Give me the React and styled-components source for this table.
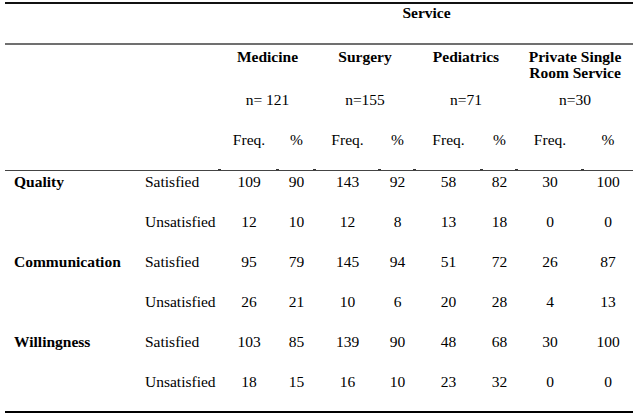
import React from 'react';
import styled, { createGlobalStyle } from 'styled-components';

const GlobalStyle = createGlobalStyle`
    html, body {
        margin: 0;
        padding: 0;
        background: #fff;
    }
    body {
        font-family: "Liberation Serif", "Times New Roman", serif;
        color: #000;
    }
`

const Page = styled.div`
    padding: 2px 0 0 5px;
    width: 642px;
    height: 418px;
    box-sizing: border-box;
`

// tables don't always inherit the font in quirks mode, so set it here
const Table = styled.table`
    width: 628px;
    table-layout: fixed;
    border-collapse: separate;
    border-spacing: 0;
    font-family: "Liberation Serif", "Times New Roman", serif;
    font-size: 15.5px;
    line-height: 18px;
    color: #000;
`

const Row = styled.tr`
    height: ${props => props.h}px;
`

// every cell sits at the top of its row, the row height gives the spacing
const Cell = styled.td`
    vertical-align: top;
    padding: ${props => props.pt || 0}px 0 0 0;
    text-align: center;
    white-space: nowrap;
    position: relative;
    box-sizing: border-box;
    border-top: ${props => props.top || 'none'};
    border-bottom: ${props => props.bottom || 'none'};
    font-weight: ${props => props.bold ? 700 : 400};
    &::before {
        content: '';
        display: ${props => props.tick ? 'block' : 'none'};
        position: absolute;
        left: -2px;
        bottom: 0;
        width: 3px;
        height: 1px;
        background: #333;
    }
`

const LabelCell = styled(Cell)`
    text-align: left;
    padding-left: ${props => props.pl}px;
`

const GroupHead = styled(Cell)`
    line-height: 16px;
    white-space: normal;
    padding-top: 4px;
`

const TOP = '2px solid #111'
const MID = '2px solid #707070'
const RULE = '1px solid #444'
const END = '2px solid #000'

const widths = [135, 80, 58, 37, 65, 35, 67, 35, 66, 50]

const groups = [
    { name: 'Medicine', n: 'n= 121' },
    { name: 'Surgery', n: 'n=155' },
    { name: 'Pediatrics', n: 'n=71' },
    { name: 'Private Single Room Service', n: 'n=30' },
]

const rows = [
    ['Quality', 'Satisfied', 109, 90, 143, 92, 58, 82, 30, 100],
    ['', 'Unsatisfied', 12, 10, 12, 8, 13, 18, 0, 0],
    ['Communication', 'Satisfied', 95, 79, 145, 94, 51, 72, 26, 87],
    ['', 'Unsatisfied', 26, 21, 10, 6, 20, 28, 4, 13],
    ['Willingness', 'Satisfied', 103, 85, 139, 90, 48, 68, 30, 100],
    ['', 'Unsatisfied', 18, 15, 16, 10, 23, 32, 0, 0],
]

export default function App() {
    return (
        <Page>
            <GlobalStyle />
            <Table>
                <colgroup>
                    {widths.map((w, i) => <col key={i} style={{ width: w }} />)}
                </colgroup>
                <thead>
                    <Row h={43}>
                        <Cell colSpan={2} top={TOP} bottom={MID} />
                        <Cell colSpan={8} top={TOP} bottom={MID} bold>Service</Cell>
                    </Row>
                    <Row h={42}>
                        <Cell colSpan={2} />
                        {groups.map(g => (
                            <GroupHead key={g.name} colSpan={2} bold>{g.name}</GroupHead>
                        ))}
                    </Row>
                    <Row h={40}>
                        <Cell colSpan={2} />
                        {groups.map(g => (
                            <Cell key={g.name} colSpan={2} pt={4}>{g.n}</Cell>
                        ))}
                    </Row>
                    <Row h={44}>
                        <Cell colSpan={2} bottom={RULE} />
                        {groups.map(g => (
                            <React.Fragment key={g.name}>
                                <Cell pt={4} bottom={RULE} tick>Freq.</Cell>
                                <Cell pt={4} bottom={RULE} tick>%</Cell>
                            </React.Fragment>
                        ))}
                    </Row>
                </thead>
                <tbody>
                    {rows.map((r, i) => {
                        const last = i === rows.length - 1
                        const b = last ? END : 'none'
                        return (
                            <Row key={i} h={last ? 42 : 40}>
                                <LabelCell pl={9} pt={2} bold bottom={b}>{r[0]}</LabelCell>
                                <LabelCell pl={5} pt={2} bottom={b}>{r[1]}</LabelCell>
                                {r.slice(2).map((v, j) => (
                                    <Cell key={j} pt={2} bottom={b}>{v}</Cell>
                                ))}
                            </Row>
                        )
                    })}
                </tbody>
            </Table>
        </Page>
    )
}
